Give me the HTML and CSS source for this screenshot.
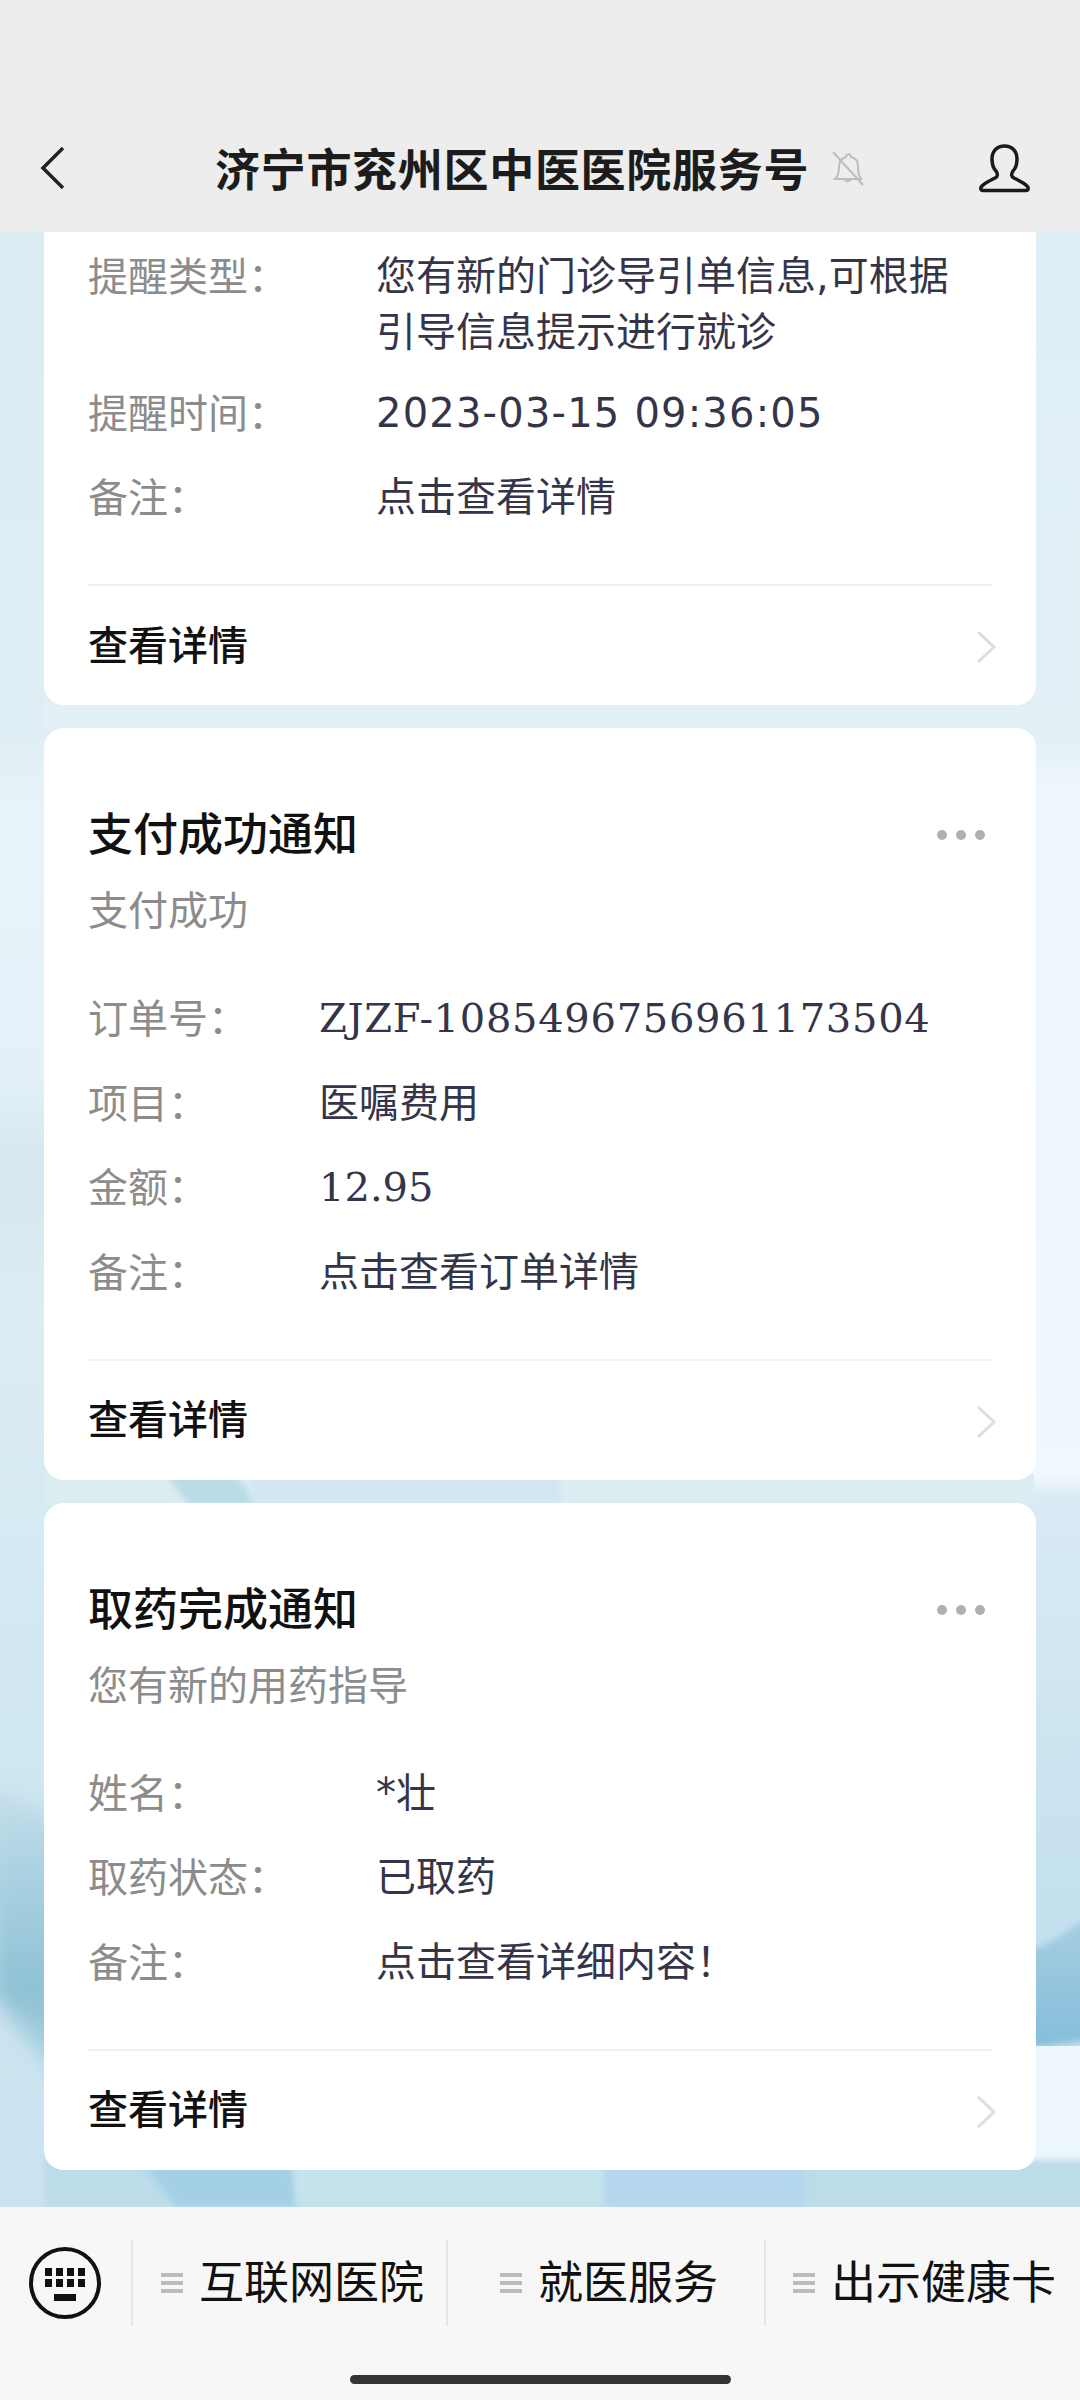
FILE: index.html
```html
<!DOCTYPE html>
<html lang="zh-CN">
<head>
<meta charset="utf-8">
<title>济宁市兖州区中医医院服务号</title>
<link rel="stylesheet" href="styles.css">
</head>
<body>
<div class="phone">
  <header class="topbar">
    <svg class="icon-back" viewBox="0 0 25 44"><path d="M23 2 3 22l20 20"/></svg>
    <h1 class="topbar-title">济宁市兖州区中医医院服务号</h1>
    <svg class="icon-bell" viewBox="0 0 32 36"><path d="M3 29c3-3 4-6 4-12 0-6 3-9 7-10 0-3 4-4 5 0 5 1 7 5 7 10 0 6 1 9 3 12H3Zm10 0c0 3 5 3 6 0"/><path d="M1 2l30 33"/></svg>
    <svg class="icon-user" viewBox="0 0 51 49"><path d="M4 46.5C1.500 46.500 1 44 3 42c4-4 9-6 13-8 3-1.500 3-4 1-7-3-3-4-7-4-12C13 7 18 2 25.500 2S38 7 38 15c0 5-1 9-4 12-2 3-2 5.500 1 7 4 2 9 4 13 8 2 2 1.500 4.500-1 4.500Z"/></svg>
  </header>

  <main class="feed">
    <svg class="feed-art" viewBox="0 232 1080 1975" preserveAspectRatio="none" aria-hidden="true">
      <defs>
        <linearGradient id="leftFill" x1="0" y1="232" x2="0" y2="2207" gradientUnits="userSpaceOnUse">
          <stop offset="0" stop-color="#dcecf3"/><stop offset=".25" stop-color="#dfeef4"/>
          <stop offset=".3" stop-color="#e9f3fa"/><stop offset=".43" stop-color="#e3f0f7"/>
          <stop offset=".47" stop-color="#d5e7ef"/><stop offset=".55" stop-color="#dcedf3"/>
          <stop offset=".8" stop-color="#cde6f1"/><stop offset="1" stop-color="#cbe3f0"/>
        </linearGradient>
        <linearGradient id="rightFill" x1="0" y1="232" x2="0" y2="2207" gradientUnits="userSpaceOnUse">
          <stop offset="0" stop-color="#dfeef6"/><stop offset=".26" stop-color="#e4f0f6"/>
          <stop offset=".28" stop-color="#eef6fd"/><stop offset=".63" stop-color="#f0f7fd"/>
          <stop offset=".64" stop-color="#d9ebf4"/><stop offset=".85" stop-color="#c4e0ee"/>
        </linearGradient>
        <linearGradient id="waveLeft" x1="0" y1="1790" x2="0" y2="2080" gradientUnits="userSpaceOnUse">
          <stop offset="0" stop-color="#c2dde9"/><stop offset=".35" stop-color="#a6cfe0"/>
          <stop offset=".7" stop-color="#8fc1d4"/><stop offset="1" stop-color="#b4d7e6"/>
        </linearGradient>
        <linearGradient id="waveRight" x1="0" y1="1920" x2="0" y2="2046" gradientUnits="userSpaceOnUse">
          <stop offset="0" stop-color="#a6cddf"/><stop offset="1" stop-color="#85bedb"/>
        </linearGradient>
      </defs>
      <rect class="art-left" x="0" y="232" width="540" height="1975"/>
      <rect class="art-right" x="540" y="232" width="540" height="1975"/>
      <rect class="art-gap1" x="44" y="700" width="1000" height="32"/>
      <rect class="art-gap2a" x="44" y="1474" width="990" height="32"/>
      <polygon class="art-gap2b art-soft" points="165,1474 235,1474 260,1506 190,1506"/>
      <rect class="art-gap2c art-soft" x="250" y="1474" width="310" height="32"/>
      <path class="art-wave-left art-blur" d="M-10 1790C24 1800 44 1815 70 1820V2090C44 2060 20 2030 -10 1990Z"/>
      <path class="art-wave-right art-soft" d="M1030 1950C1050 1945 1068 1930 1090 1916V2040L1030 2048Z"/>
      <rect class="art-foot-right" x="1030" y="2046" width="50" height="122"/>
      <rect class="art-foot-a art-soft" x="44" y="2160" width="1040" height="47"/>
      <polygon class="art-foot-b art-soft" points="140,2160 290,2160 300,2207 176,2207"/>
      <rect class="art-foot-c art-soft" x="295" y="2160" width="310" height="47"/>
      <rect class="art-foot-d art-soft" x="605" y="2160" width="200" height="47"/>
    </svg>

    <article class="card card-clipped">
      <div class="rows rows-first rows-wide">
        <div class="row row-tight"><span class="row-label">提醒类型：</span><span class="row-value">您有新的门诊导引单信息,可根据<br>引导信息提示进行就诊</span></div>
        <div class="row"><span class="row-label">提醒时间：</span><span class="row-value row-date">2023-03-15 09:36:05</span></div>
        <div class="row"><span class="row-label">备注：</span><span class="row-value">点击查看详情</span></div>
      </div>
      <a class="card-link"><span>查看详情</span><svg class="icon-chevron" viewBox="0 0 20 34"><path d="M2 2l16 15L2 32"/></svg></a>
    </article>

    <article class="card">
      <div class="card-head"><h2 class="card-title">支付成功通知</h2><span class="dots"><i></i><i></i><i></i></span></div>
      <p class="card-sub">支付成功</p>
      <div class="rows rows-narrow">
        <div class="row"><span class="row-label">订单号：</span><span class="row-value row-serif row-order">ZJZF-1085496756961173504</span></div>
        <div class="row"><span class="row-label">项目：</span><span class="row-value">医嘱费用</span></div>
        <div class="row"><span class="row-label">金额：</span><span class="row-value row-serif">12.95</span></div>
        <div class="row"><span class="row-label">备注：</span><span class="row-value">点击查看订单详情</span></div>
      </div>
      <a class="card-link"><span>查看详情</span><svg class="icon-chevron" viewBox="0 0 20 34"><path d="M2 2l16 15L2 32"/></svg></a>
    </article>

    <article class="card">
      <div class="card-head"><h2 class="card-title">取药完成通知</h2><span class="dots"><i></i><i></i><i></i></span></div>
      <p class="card-sub">您有新的用药指导</p>
      <div class="rows rows-wide">
        <div class="row"><span class="row-label">姓名：</span><span class="row-value">*壮</span></div>
        <div class="row"><span class="row-label">取药状态：</span><span class="row-value">已取药</span></div>
        <div class="row"><span class="row-label">备注：</span><span class="row-value">点击查看详细内容！</span></div>
      </div>
      <a class="card-link"><span>查看详情</span><svg class="icon-chevron" viewBox="0 0 20 34"><path d="M2 2l16 15L2 32"/></svg></a>
    </article>
  </main>

  <footer class="menu">
    <nav class="menu-row">
      <div class="menu-kbd">
        <svg class="icon-kbd" viewBox="0 0 72 72"><circle class="kbd-ring" cx="36" cy="36" r="34"/><g class="kbd-keys"><rect x="16" y="21" width="7" height="8"/><rect x="27" y="21" width="7" height="8"/><rect x="38" y="21" width="7" height="8"/><rect x="49" y="21" width="7" height="8"/><rect x="16" y="32" width="7" height="8"/><rect x="27" y="32" width="7" height="8"/><rect x="38" y="32" width="7" height="8"/><rect x="49" y="32" width="7" height="8"/><rect x="25" y="47" width="22" height="7"/></g></svg>
      </div>
      <div class="menu-tab menu-tab-a"><span class="bars"><i></i><i></i><i></i></span><span class="menu-text">互联网医院</span></div>
      <div class="menu-tab menu-tab-b"><span class="bars"><i></i><i></i><i></i></span><span class="menu-text">就医服务</span></div>
      <div class="menu-tab menu-tab-c"><span class="bars"><i></i><i></i><i></i></span><span class="menu-text">出示健康卡</span></div>
    </nav>
    <div class="home-bar"></div>
  </footer>
</div>
</body>
</html>
```

FILE: styles.css
```css
* { box-sizing: border-box; }
html, body { margin: 0; padding: 0; }
body {
  width: 1080px;
  height: 2400px;
  overflow: hidden;
  font-family: "DejaVu Sans", "Noto Sans CJK SC", sans-serif;
}
.phone { width: 1080px; height: 2400px; display: flex; flex-direction: column; }

/* top bar */
.topbar {
  flex: 0 0 232px;
  background: #ededed;
  padding: 104px 50px 0 40px;
  display: flex;
  align-items: center;
}
.icon-back { width: 25px; height: 44px; flex: none; }
.icon-back path { fill: none; stroke: #222; stroke-width: 3.5; }
.topbar-title {
  margin: 0 0 0 150px;
  width: 591px;
  flex: none;
  font: 700 45px/60px "Noto Sans CJK SC", sans-serif;
  color: #1c1c1c;
  white-space: nowrap;
  letter-spacing: .7px;
}
.icon-bell { width: 32px; height: 36px; margin-left: 26px; flex: none; }
.icon-bell path { fill: none; stroke: #bdbdbd; stroke-width: 2; }
.icon-user { width: 51px; height: 49px; margin-left: auto; flex: none; }
.icon-user path { fill: none; stroke: #1a1a1a; stroke-width: 3.5; stroke-linejoin: round; }

/* feed */
.feed {
  flex: 1;
  position: relative;
  overflow: hidden;
  padding: 0 44px;
  display: flex;
  flex-direction: column;
  gap: 23px;
}
.feed-art { position: absolute; inset: 0; width: 100%; height: 100%; display: block; }
.art-soft { filter: blur(3px); }
.art-blur { filter: blur(10px); }
.art-left { fill: url(#leftFill); }
.art-right { fill: url(#rightFill); }
.art-gap1 { fill: #e3f0f6; }
.art-gap2a { fill: #dcedf2; }
.art-gap2b { fill: #b9dce6; }
.art-gap2c { fill: #d2e6f2; }
.art-wave-left { fill: url(#waveLeft); }
.art-wave-right { fill: url(#waveRight); }
.art-foot-right { fill: #eef7fc; }
.art-foot-a { fill: #bcdce8; }
.art-foot-b { fill: #a3d0e4; }
.art-foot-c { fill: #c5e4ec; }
.art-foot-d { fill: #b4d7ee; }

.card {
  position: relative;
  background: #fff;
  border-radius: 20px;
  padding: 74px 44px 0;
}
.card-clipped { padding-top: 16px; border-radius: 0 0 20px 20px; }
.card-head { display: flex; align-items: center; justify-content: space-between; }
.card-title {
  margin: 0;
  font: 500 45px/60px "Noto Sans CJK SC", sans-serif;
  color: #111;
}
.dots { display: flex; gap: 9px; margin: 6px 7px 0 0; }
.dots i { width: 10px; height: 10px; border-radius: 50%; background: #b0b0b0; }
.card-sub {
  margin: 18px 0 54px;
  font: 400 40px/56px "Noto Sans CJK SC", sans-serif;
  color: #8c8c8c;
}
.rows { display: flex; flex-direction: column; gap: 28.5px; padding-bottom: 59px; }
.rows-wide { --label-width: 288px; }
.rows-narrow { --label-width: 231px; }
.row { display: flex; font-size: 40px; line-height: 56px; }
.row-tight { margin-bottom: -4px; }
.row-label { flex: 0 0 var(--label-width); margin-top: -2px; color: #8c8c8c; font-family: "Noto Sans CJK SC", sans-serif; white-space: nowrap; }
.row-value { color: #353549; white-space: nowrap; }
.row-date { letter-spacing: 1.2px; }
.row-serif { font-family: "DejaVu Serif", "Noto Sans CJK SC", serif; }
.row-order { letter-spacing: .7px; }

.card-link {
  height: 121px;
  padding-bottom: 6px;
  border-top: 2px solid #f1f1f1;
  display: flex;
  align-items: center;
  justify-content: space-between;
  font: 500 40px/56px "Noto Sans CJK SC", sans-serif;
  color: #111;
}
.icon-chevron { width: 20px; height: 34px; margin: 9px -4px 0 0; flex: none; }
.icon-chevron path { fill: none; stroke: #dedede; stroke-width: 3; }

/* bottom menu */
.menu { flex: 0 0 193px; background: #f7f7f7; padding-top: 33px; }
.menu-row { display: flex; height: 86px; }
.menu-kbd { flex: 0 0 131px; display: flex; align-items: center; padding-left: 29px; }
.icon-kbd { width: 72px; height: 72px; }
.kbd-ring { fill: none; stroke: #111; stroke-width: 4; }
.kbd-keys rect { fill: #111; }
.menu-tab {
  display: flex;
  align-items: center;
  gap: 16px;
  border-left: 2px solid #e6e6e6;
  font: 400 45px/60px "Noto Sans CJK SC", sans-serif;
  color: #111;
  white-space: nowrap;
}
.menu-text { margin-bottom: 6px; }
.menu-tab-a { flex: 0 0 315px; padding-left: 28px; }
.menu-tab-b { flex: 0 0 318px; padding-left: 52px; }
.menu-tab-c { flex: 0 0 316px; padding-left: 27px; }
.bars { width: 22px; height: 20px; display: flex; flex-direction: column; justify-content: space-between; flex: none; }
.bars i { display: block; height: 4px; background: #bbb; }
.home-bar { width: 381px; height: 9px; margin: 49px auto 0; border-radius: 5px; background: #333; }
```
